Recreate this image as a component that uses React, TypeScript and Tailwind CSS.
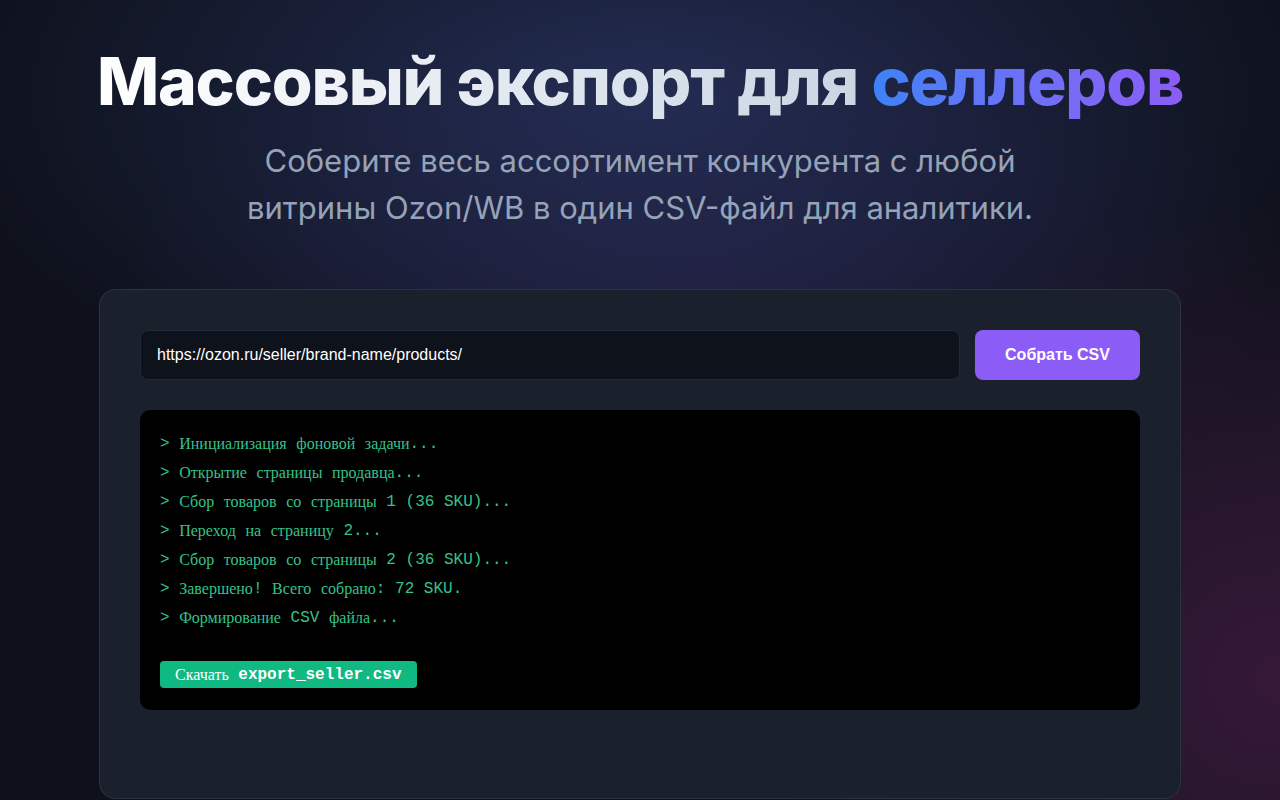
import React from 'react';

const logLines = [
  'Инициализация фоновой задачи...',
  'Открытие страницы продавца...',
  'Сбор товаров со страницы 1 (36 SKU)...',
  'Переход на страницу 2...',
  'Сбор товаров со страницы 2 (36 SKU)...',
  'Завершено! Всего собрано: 72 SKU.',
  'Формирование CSV файла...',
];

function MonoText({ text, cyrClass = '' }: { text: string; cyrClass?: string }) {
  const parts = text.split(/([А-Яа-яЁё]+)/);
  return (
    <>
      {parts.map((p, i) =>
        /[А-Яа-яЁё]/.test(p) ? (
          <span key={i} className={"font-['Liberation_Serif',serif] leading-none " + cyrClass}>
            {p}
          </span>
        ) : (
          <span key={i} className="leading-none">{p}</span>
        )
      )}
    </>
  );
}

export default function App() {
  return (
    <div className="min-h-screen w-full overflow-hidden bg-[#0e111b] bg-[radial-gradient(ellipse_55%_45%_at_50%_12%,rgba(40,52,98,0.75),transparent_100%),radial-gradient(ellipse_45%_40%_at_55%_35%,rgba(60,40,100,0.35),transparent_100%),radial-gradient(ellipse_40%_60%_at_100%_85%,rgba(80,30,75,0.6),transparent_100%)]">
      <div className="flex flex-col items-center pt-[43px]">
        <h1 className="font-['Inter',sans-serif] text-[66px] font-extrabold leading-[76px] tracking-[-0.018em]">
          <span className="bg-gradient-to-r from-white to-slate-300 bg-clip-text text-transparent">
            Массовый экспорт для{' '}
          </span>
          <span className="bg-gradient-to-r from-[#3b82f6] to-[#8b5cf6] bg-clip-text text-transparent">
            селлеров
          </span>
        </h1>
        <p className="mt-[18px] text-center font-['Inter',sans-serif] text-[31px] leading-[47px] text-[#94a3b8]">
          Соберите весь ассортимент конкурента с любой
          <br />
          витрины Ozon/WB в один CSV-файл для аналитики.
        </p>

        <div className="mt-[58px] h-[510px] w-[1082px] rounded-2xl border border-[#2c3242] bg-[#1b202d] p-10">
          <div className="flex gap-[15px]">
            <input
              readOnly
              value="https://ozon.ru/seller/brand-name/products/"
              className="h-[50px] flex-1 rounded-lg border border-[#232938] bg-[#0e121a] px-4 font-['Liberation_Sans',Arial,sans-serif] text-base text-white outline-none"
            />
            <button className="h-[50px] w-[165px] rounded-lg bg-[#8b5cf6] font-['Liberation_Sans',Arial,sans-serif] text-base font-bold text-white">
              Собрать CSV
            </button>
          </div>

          <div className="mt-[30px] h-[300px] rounded-[10px] bg-black px-5 pt-[19px] font-['Liberation_Mono','Courier_New',monospace] text-base text-[#34c28a]">
            {logLines.map((line, i) => (
              <div key={i} className="flex h-[29px] items-center whitespace-pre">
                <MonoText text={'> ' + line} />
              </div>
            ))}
            <button className="mt-[29px] flex h-[27px] items-center rounded-[4px] bg-[#10b981] px-[15px] text-base font-bold text-white whitespace-pre">
              <MonoText text="Скачать export_seller.csv" cyrClass="font-normal" />
            </button>
          </div>
        </div>
      </div>
    </div>
  );
}
